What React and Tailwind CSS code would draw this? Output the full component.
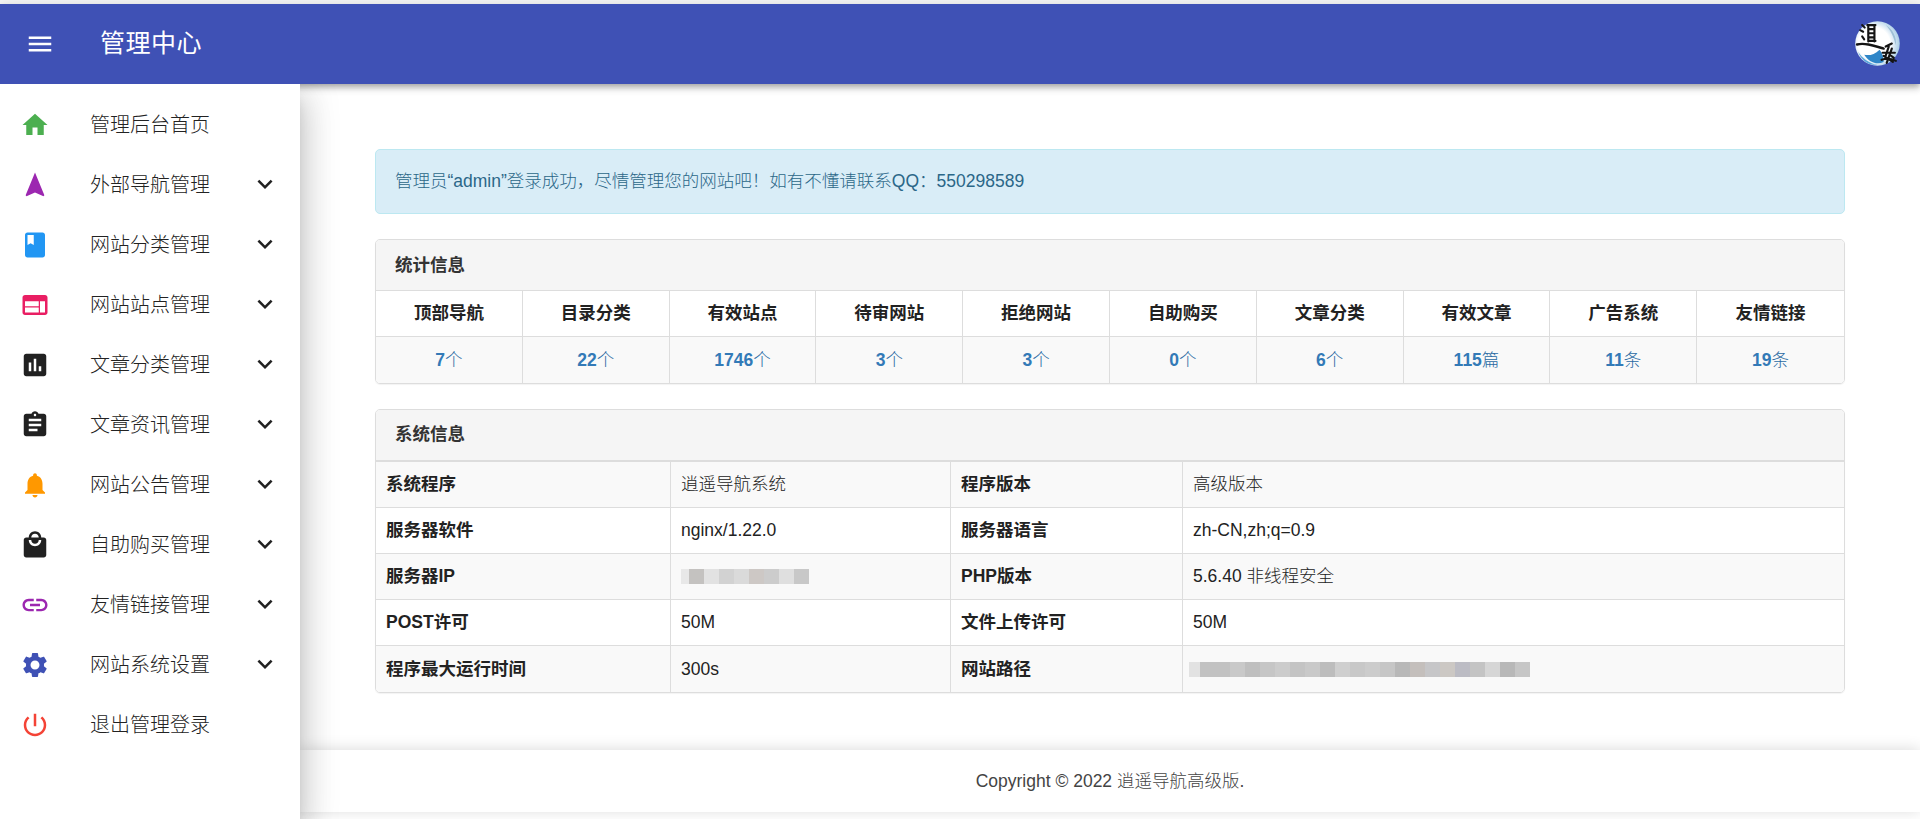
const FONT = "font-['Liberation_Sans','Noto_Sans_CJK_SC',sans-serif]";

const P = {
  menu: "M3 18h18v-2H3v2zm0-5h18v-2H3v2zm0-7v2h18V6H3z",
  home: "M10 20v-6h4v6h5v-8h3L12 3 2 12h3v8z",
  nav: "M12 2L4.5 20.29l.71.71L12 18l6.79 3 .71-.71z",
  book: "M18 2H6c-1.1 0-2 .9-2 2v16c0 1.1.9 2 2 2h12c1.1 0 2-.9 2-2V4c0-1.1-.9-2-2-2zM6 4h5v8l-2.5-1.5L6 12V4z",
  web: "M20 4H4c-1.1 0-1.99.9-1.99 2L2 18c0 1.1.9 2 2 2h16c1.1 0 2-.9 2-2V6c0-1.1-.9-2-2-2zm-5 14H4v-4h11v4zm0-5H4V9h11v4zm5 5h-4V9h4v9z",
  assess: "M19 3H5c-1.1 0-2 .9-2 2v14c0 1.1.9 2 2 2h14c1.1 0 2-.9 2-2V5c0-1.1-.9-2-2-2zM9 17H7v-7h2v7zm4 0h-2V7h2v10zm4 0h-2v-4h2v4z",
  assign: "M19 3h-4.18C14.4 1.84 13.3 1 12 1c-1.3 0-2.4.84-2.82 2H5c-1.1 0-2 .9-2 2v14c0 1.1.9 2 2 2h14c1.1 0 2-.9 2-2V5c0-1.1-.9-2-2-2zm-7 0c.55 0 1 .45 1 1s-.45 1-1 1-1-.45-1-1 .45-1 1-1zm2 14H7v-2h7v2zm3-4H7v-2h10v2zm0-4H7V7h10v2z",
  bell: "M12 22c1.1 0 2-.9 2-2h-4c0 1.1.89 2 2 2zm6-6v-5c0-3.07-1.64-5.64-4.5-6.32V4c0-.83-.67-1.5-1.5-1.5s-1.5.67-1.5 1.5v.68C7.63 5.36 6 7.92 6 11v5l-2 2v1h16v-1l-2-2z",
  mall: "M19 6h-2c0-2.76-2.24-5-5-5S7 3.24 7 6H5c-1.1 0-1.99.9-1.99 2L3 20c0 1.1.9 2 2 2h14c1.1 0 2-.9 2-2V8c0-1.1-.9-2-2-2zm-7-3c1.66 0 3 1.34 3 3H9c0-1.66 1.34-3 3-3zm0 10c-2.76 0-5-2.24-5-5h2c0 1.66 1.34 3 3 3s3-1.34 3-3h2c0 2.76-2.24 5-5 5z",
  link: "M3.9 12c0-1.71 1.39-3.1 3.1-3.1h4V7H7c-2.76 0-5 2.24-5 5s2.24 5 5 5h4v-1.9H7c-1.71 0-3.1-1.39-3.1-3.1zM8 13h8v-2H8v2zm9-6h-4v1.9h4c1.71 0 3.1 1.39 3.1 3.1s-1.39 3.1-3.1 3.1h-4V17h4c2.76 0 5-2.24 5-5s-2.24-5-5-5z",
  gear: "M19.14 12.94c.04-.3.06-.61.06-.94 0-.32-.02-.64-.07-.94l2.03-1.58c.18-.14.23-.41.12-.61l-1.92-3.32c-.12-.22-.37-.29-.59-.22l-2.39.96c-.5-.38-1.03-.7-1.62-.94l-.36-2.54c-.04-.24-.24-.41-.48-.41h-3.84c-.24 0-.43.17-.47.41l-.36 2.54c-.59.24-1.13.57-1.62.94l-2.39-.96c-.22-.08-.47 0-.59.22L2.74 8.87c-.12.21-.08.47.12.61l2.03 1.58c-.05.3-.09.63-.09.94s.02.64.07.94l-2.03 1.58c-.18.14-.23.41-.12.61l1.92 3.32c.12.22.37.29.59.22l2.39-.96c.5.38 1.03.7 1.62.94l.36 2.54c.05.24.24.41.48.41h3.84c.24 0 .44-.17.47-.41l.36-2.54c.59-.24 1.13-.56 1.62-.94l2.39.96c.22.08.47 0 .59-.22l1.92-3.32c.12-.22.07-.47-.12-.61l-2.01-1.58zM12 15.6c-1.98 0-3.6-1.62-3.6-3.6s1.62-3.6 3.6-3.6 3.6 1.62 3.6 3.6-1.62 3.6-3.6 3.6z",
  power: "M13 3h-2v10h2V3zm4.83 2.17l-1.42 1.42C17.99 7.86 19 9.81 19 12c0 3.87-3.13 7-7 7s-7-3.13-7-7c0-2.19 1.01-4.14 2.58-5.42L6.17 5.17C4.23 6.82 3 9.26 3 12c0 4.97 4.03 9 9 9s9-4.03 9-9c0-2.74-1.23-5.18-3.17-6.83z",
  more: "M16.59 8.59L12 13.17 7.41 8.59 6 10l6 6 6-6z",
};

function Icon({ d, className }) {
  return (
    <svg viewBox="0 0 24 24" className={`w-[30px] h-[30px] shrink-0 fill-current ${className}`}>
      <path d={d} />
    </svg>
  );
}

const MENU = [
  [P.home, "text-[#4caf50]", "管理后台首页", false],
  [P.nav, "text-[#9c27b0]", "外部导航管理", true],
  [P.book, "text-[#2196f3]", "网站分类管理", true],
  [P.web, "text-[#e91e63]", "网站站点管理", true],
  [P.assess, "text-[#212121]", "文章分类管理", true],
  [P.assign, "text-[#212121]", "文章资讯管理", true],
  [P.bell, "text-[#ff9800]", "网站公告管理", true],
  [P.mall, "text-[#212121]", "自助购买管理", true],
  [P.link, "text-[#9c27b0]", "友情链接管理", true],
  [P.gear, "text-[#3f51b5]", "网站系统设置", true],
  [P.power, "text-[#f44336]", "退出管理登录", false],
];

const STATS = [
  ["顶部导航", "7", "个"],
  ["目录分类", "22", "个"],
  ["有效站点", "1746", "个"],
  ["待审网站", "3", "个"],
  ["拒绝网站", "3", "个"],
  ["自助购买", "0", "个"],
  ["文章分类", "6", "个"],
  ["有效文章", "115", "篇"],
  ["广告系统", "11", "条"],
  ["友情链接", "19", "条"],
];

const IP_BLOCKS = [
  "bg-[#e8e8e8] w-[8px]", "bg-[#c4c2c0] w-[15px]", "bg-[#e2e2e2] w-[15px]", "bg-[#d2d2d2] w-[15px]",
  "bg-[#dadada] w-[15px]", "bg-[#cdc8c5] w-[15px]", "bg-[#cccccc] w-[15px]", "bg-[#dfdfdf] w-[15px]", "bg-[#c8c8c8] w-[15px]",
];
const PATH_BLOCKS = [
  "bg-[#e2e2e2] w-[11px]", "bg-[#c2c2c2] w-[30px]", "bg-[#c9c9c9] w-[15px]", "bg-[#bfbfbf] w-[15px]",
  "bg-[#c6c6c6] w-[15px]", "bg-[#cccccc] w-[15px]", "bg-[#c4c4c4] w-[15px]", "bg-[#c9c9c9] w-[15px]", "bg-[#bdbdbd] w-[15px]",
  "bg-[#cfcfcf] w-[15px]", "bg-[#c8c8c8] w-[15px]", "bg-[#cccccc] w-[15px]", "bg-[#c6c6c6] w-[15px]", "bg-[#b8b8b8] w-[15px]",
  "bg-[#c4bfbc] w-[15px]", "bg-[#c6c6c8] w-[15px]", "bg-[#ccc8c4] w-[15px]", "bg-[#bcbcc4] w-[15px]", "bg-[#c4c4c4] w-[15px]",
  "bg-[#d6d6d6] w-[15px]", "bg-[#b8b8b8] w-[15px]", "bg-[#c6c6c6] w-[15px]",
];

function Mosaic({ blocks, className = "" }) {
  return (
    <div className={`flex h-[15px] blur-[0.4px] ${className}`}>
      {blocks.map((c, i) => (
        <span key={i} className={`block h-full ${c}`} />
      ))}
    </div>
  );
}

const SYS = [
  ["系统程序", "逍遥导航系统", "程序版本", "高级版本"],
  ["服务器软件", "nginx/1.22.0", "服务器语言", "zh-CN,zh;q=0.9"],
  ["服务器IP", <Mosaic blocks={IP_BLOCKS} />, "PHP版本", "5.6.40 非线程安全"],
  ["POST许可", "50M", "文件上传许可", "50M"],
  ["程序最大运行时间", "300s", "网站路径", <Mosaic blocks={PATH_BLOCKS} className="-ml-[4px]" />],
];

function Avatar() {
  return (
    <svg viewBox="0 0 44 44" className="w-[45px] h-[45px] shrink-0 -mt-[1px] blur-[0.35px]">
      <defs>
        <radialGradient id="av" cx="0.42" cy="0.5" r="0.58">
          <stop offset="0.62" stopColor="#ffffff" />
          <stop offset="1" stopColor="#a9cde6" />
        </radialGradient>
      </defs>
      <circle cx="22" cy="22" r="21.8" fill="url(#av)" />
      <path d="M30 4 C 37 8, 41 16, 40 24 C 38 16, 35 9, 30 4 z" fill="#9dbfd6" />
      <path d="M9 33 C 14 34, 19 33, 24 28 C 27 31, 28 36, 28 40 C 22 43, 14 41, 9 33 z" fill="#2f86c8" />
      <path d="M3 30 C 7 36, 13 41, 22 43 C 14 43.5, 6 39, 3 30 z" fill="#5aa6da" />
      <g stroke="#141414" fill="none" strokeLinecap="round">
        <path d="M2 23 C 9 21, 18 24, 28 27" strokeWidth="2.4" />
        <path d="M7 4 l2.5 2.5 M5 9 l3 1.5 M7 15 l2 3" strokeWidth="2" />
        <path d="M12 4 h8 M13 8 h6 M13 12 h6 M13 16 h6 M13 19.5 h7 M13 5 v15 M19 5 v15" strokeWidth="2.1" />
      </g>
      <g stroke="#141414" fill="none" strokeLinecap="round" strokeWidth="2.1">
        <path d="M30 25 l6 -3 M27 31 h12 M33 25 l-3 9 M36 27 l-5 14 M26 38 c 5 -2, 10 -1, 14 1 M28 34 l9 6 M34 33 l4 3" />
      </g>
    </svg>
  );
}

export default function App() {
  return (
    <div className={`h-[819px] overflow-hidden bg-[#f5f5f5] pt-[4px] flex flex-col ${FONT}`}>
      <header className="relative z-20 h-[80px] shrink-0 bg-[#3f51b5] text-white flex items-center pl-[25px] pr-[20px] shadow-[0_2.5px_5px_-1px_rgba(0,0,0,0.2),0_5px_6px_0_rgba(0,0,0,0.14),0_1px_12px_0_rgba(0,0,0,0.12)]">
        <Icon d={P.menu} className="text-white" />
        <h1 className="ml-[45px] text-[25px] font-normal tracking-[0.5px] flex-1">管理中心</h1>
        <Avatar />
      </header>

      <div className="flex flex-1 min-h-0">
        <div className="relative w-[300px] shrink-0">
          <div className="absolute inset-0 z-10 shadow-[0_10px_12px_-6px_rgba(0,0,0,0.2),0_20px_30px_2px_rgba(0,0,0,0.14),0_8px_36px_6px_rgba(0,0,0,0.12)]" />
          <nav className="relative z-30 h-full bg-white pt-[11px]">
            {MENU.map(([d, color, label, hasMore]) => (
              <div key={label} className="h-[60px] flex items-center pl-[20px] relative">
                <Icon d={d} className={color} />
                <span className="ml-[40px] text-[20px] text-[#222] font-light flex-1">{label}</span>
                {hasMore && <Icon d={P.more} className="text-[#212121] mr-[20px] -mt-[2px]" />}
              </div>
            ))}
          </nav>
        </div>

        <main className="flex-1 min-w-0 flex flex-col bg-white">
          <div className="flex-1 px-[75px] pt-[65px] text-[17.5px] text-[#222]">
            <div className="h-[65px] flex items-center px-[19px] rounded-[5px] bg-[#d9edf7] border border-[#bce8f1] text-[#2b6788] font-light mb-[25px]">
              管理员“admin”登录成功，尽情管理您的网站吧！如有不懂请联系QQ：550298589
            </div>

            <section className="rounded-[5px] border border-[#ddd] mb-[25px] overflow-hidden shadow-[0_1px_1px_rgba(0,0,0,0.05)]">
              <div className="h-[51px] flex items-center px-[19px] bg-[#f5f5f5] border-b border-[#ddd] font-bold text-[#333]">统计信息</div>
              <table className="w-full table-fixed border-separate border-spacing-0">
                <tbody>
                  <tr className="h-[46px] bg-white">
                    {STATS.map(([t]) => (
                      <th key={t} className="font-bold text-center border-r last:border-r-0 border-b border-[#ddd] text-[#222]">{t}</th>
                    ))}
                  </tr>
                  <tr className="h-[46px] bg-[#f9f9f9]">
                    {STATS.map(([t, n, u]) => (
                      <td key={t} className="text-center border-r last:border-r-0 border-[#ddd] text-[#337ab7]">
                        <b>{n}</b>
                        <span className="font-light text-[#2a6aa3]">{u}</span>
                      </td>
                    ))}
                  </tr>
                </tbody>
              </table>
            </section>

            <section className="rounded-[5px] border border-[#ddd] overflow-hidden shadow-[0_1px_1px_rgba(0,0,0,0.05)]">
              <div className="h-[52px] flex items-center px-[19px] pb-[2px] bg-[#f5f5f5] border-b-2 border-[#ddd] font-bold text-[#333]">系统信息</div>
              <table className="w-full table-fixed border-separate border-spacing-0">
                <colgroup>
                  <col className="w-[295px]" />
                  <col className="w-[280px]" />
                  <col className="w-[232px]" />
                  <col />
                </colgroup>
                <tbody>
                  {SYS.map((r, i) => (
                    <tr key={i} className={`h-[46px] ${i % 2 === 0 ? "bg-[#f9f9f9]" : "bg-white"}`}>
                      <th className={`text-left font-bold pl-[10px] border-r border-[#ddd] text-[#222] ${i === 4 ? "" : "border-b"}`}>{r[0]}</th>
                      <td className={`pl-[10px] border-r border-[#ddd] font-light ${i === 4 ? "" : "border-b"}`}>{r[1]}</td>
                      <th className={`text-left font-bold pl-[10px] border-r border-[#ddd] text-[#222] ${i === 4 ? "" : "border-b"}`}>{r[2]}</th>
                      <td className={`pl-[10px] border-[#ddd] font-light ${i === 4 ? "" : "border-b"}`}>{r[3]}</td>
                    </tr>
                  ))}
                </tbody>
              </table>
            </section>
          </div>

          <footer className="h-[62px] shrink-0 mb-[7px] bg-white flex items-center justify-center text-[17.5px] text-[#444] font-light shadow-[0_-1px_14px_rgba(0,0,0,0.14)] relative">
            Copyright © 2022 逍遥导航高级版.
          </footer>
        </main>
      </div>
    </div>
  );
}
